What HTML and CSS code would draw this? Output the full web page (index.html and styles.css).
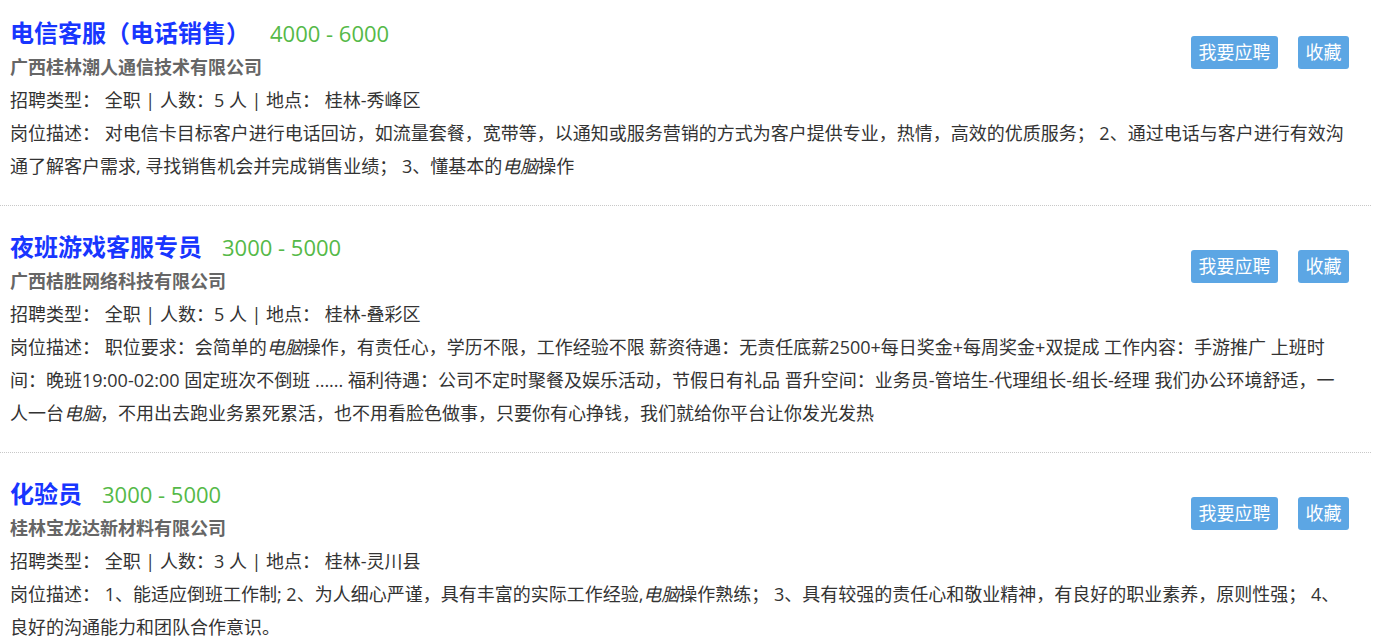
FILE: index.html
```html
<!DOCTYPE html>
<html lang="zh-CN">
<head>
<meta charset="utf-8">
<title>招聘信息</title>
<link rel="stylesheet" href="styles.css">
</head>
<body>
<div class="job-list">
  <div class="job">
    <div class="job-actions">
      <a class="btn">我要应聘</a>
      <a class="btn">收藏</a>
    </div>
    <h2 class="job-title">电信客服（电话销售）<span class="salary">4000 - 6000</span></h2>
    <p class="company">广西桂林潮人通信技术有限公司</p>
    <p class="info">招聘类型： 全职 | 人数：5 人 | 地点： 桂林-秀峰区</p>
    <p class="desc">岗位描述： 对电信卡目标客户进行电话回访，如流量套餐，宽带等，以通知或服务营销的方式为客户提供专业，热情，高效的优质服务； 2、通过电话与客户进行有效沟通了解客户需求, 寻找销售机会并完成销售业绩； 3、懂基本的<em>电脑</em>操作</p>
  </div>
  <div class="job">
    <div class="job-actions">
      <a class="btn">我要应聘</a>
      <a class="btn">收藏</a>
    </div>
    <h2 class="job-title">夜班游戏客服专员<span class="salary">3000 - 5000</span></h2>
    <p class="company">广西桔胜网络科技有限公司</p>
    <p class="info">招聘类型： 全职 | 人数：5 人 | 地点： 桂林-叠彩区</p>
    <p class="desc">岗位描述： 职位要求：会简单的<em>电脑</em>操作，有责任心，学历不限，工作经验不限 薪资待遇：无责任底薪2500+每日奖金+每周奖金+双提成 工作内容：手游推广 上班时间：晚班19:00-02:00 固定班次不倒班 ...... 福利待遇：公司不定时聚餐及娱乐活动，节假日有礼品 晋升空间：业务员-管培生-代理组长-组长-经理 我们办公环境舒适，一人一台<em>电脑</em>，不用出去跑业务累死累活，也不用看脸色做事，只要你有心挣钱，我们就给你平台让你发光发热</p>
  </div>
  <div class="job">
    <div class="job-actions">
      <a class="btn">我要应聘</a>
      <a class="btn">收藏</a>
    </div>
    <h2 class="job-title">化验员<span class="salary">3000 - 5000</span></h2>
    <p class="company">桂林宝龙达新材料有限公司</p>
    <p class="info">招聘类型： 全职 | 人数：3 人 | 地点： 桂林-灵川县</p>
    <p class="desc">岗位描述： 1、能适应倒班工作制; 2、为人细心严谨，具有丰富的实际工作经验,<em>电脑</em>操作熟练； 3、具有较强的责任心和敬业精神，有良好的职业素养，原则性强； 4、良好的沟通能力和团队合作意识。</p>
  </div>
</div>
</body>
</html>
```
FILE: styles.css
```css
html, body {
  margin: 0;
  padding: 0;
  background: #fff;
}
body {
  font-family: "Open Sans", "Noto Sans CJK SC", sans-serif;
  font-size: 18px;
  color: #333;
}
.job-list {
  width: 1371px;
}
.job {
  padding: 23px 19px 22px 10px;
  border-bottom: 1px dotted #c8c8c8;
}
.job:first-child {
  padding-top: 15px;
}
.job-actions {
  float: right;
  display: flex;
  gap: 20px;
  margin: 21px 3px 0 0;
}
.btn {
  display: block;
  height: 33px;
  line-height: 33px;
  padding: 0 7.5px;
  background: #5ca6e4;
  color: #fff;
  border-radius: 3px;
  font-size: 18px;
  cursor: pointer;
}
.job-title {
  margin: 0;
  font-size: 24px;
  line-height: 36px;
  font-weight: bold;
  color: #1836ff;
}
.salary {
  margin-left: 20px;
  font-size: 22px;
  font-weight: normal;
  color: #55b948;
}
.company {
  margin: 0;
  line-height: 33px;
  font-weight: bold;
  color: #666;
}
.info,
.desc {
  margin: 0;
  line-height: 33px;
}
.info .sep {
  margin: 0 2px;
}
.desc em {
  font-style: italic;
}
```
